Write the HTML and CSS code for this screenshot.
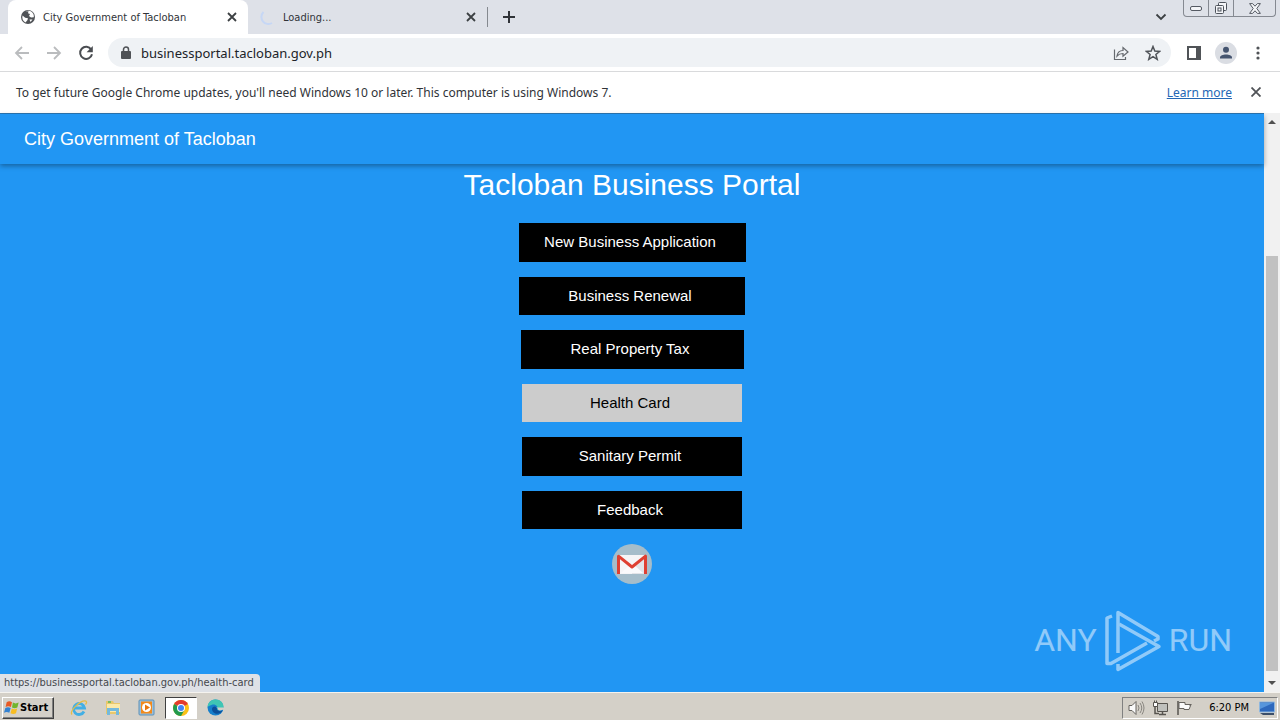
FILE: index.html
```html
<!DOCTYPE html>
<html lang="en">
<head>
<meta charset="utf-8">
<title>City Government of Tacloban</title>
<link rel="stylesheet" href="styles.css">
</head>
<body>
<div class="tabstrip">
  <div class="tab tab-active">
    <svg class="favicon" width="16" height="16" viewBox="0 0 16 16"><circle cx="8" cy="8" r="7" fill="#505357"/><path d="M2.500 6.500 5.200 8.700 8 9.200 7.500 11 5.500 13.500 C3 12.400 1.800 9.500 2.500 6.500Z M5.500 2.500 8.500 2.200 8 4.200 10 5 9 7 11 8.500 13.800 8.200 C14.500 4.500 11 1 7.800 1.800Z" fill="#fff"/><path d="M9.500 10.500h3l-2 2.500z" fill="#fff"/></svg>
    <span class="tab-title">City Government of Tacloban</span>
    <button class="icon-btn" aria-label="Close tab"><svg width="10" height="10" viewBox="0 0 10 10"><path d="M1 1l8 8M9 1l-8 8" stroke="#3c4043" stroke-width="1.8"/></svg></button>
  </div>
  <div class="tab">
    <svg class="favicon" width="16" height="16" viewBox="0 0 16 16"><path d="M3.500 3A7 7 0 0 0 12 14" fill="none" stroke="#c6d7f5" stroke-width="2"/></svg>
    <span class="tab-title">Loading...</span>
    <button class="icon-btn" aria-label="Close tab"><svg width="10" height="10" viewBox="0 0 10 10"><path d="M1 1l8 8M9 1l-8 8" stroke="#3c4043" stroke-width="1.8"/></svg></button>
  </div>
  <button class="icon-btn new-tab" aria-label="New tab"><svg width="12" height="12" viewBox="0 0 12 12"><path d="M6 0v12M0 6h12" stroke="#303338" stroke-width="2"/></svg></button>
  <button class="icon-btn tab-search" aria-label="Search tabs"><svg width="12" height="8" viewBox="0 0 12 8"><path d="M1.500 1.500 6 6l4.500-4.500" fill="none" stroke="#3c4043" stroke-width="1.800"/></svg></button>
  <div class="window-controls">
    <button class="win-btn" aria-label="Minimize"><svg width="12" height="5" viewBox="0 0 12 5"><rect x=".5" y=".5" width="11" height="4" rx="1.500" fill="#f4f5f8" stroke="#555a63"/></svg></button>
    <button class="win-btn" aria-label="Restore"><svg width="14" height="14" viewBox="0 0 14 14"><g fill="#f4f5f8" stroke="#4d525b"><rect x="4.500" y="1.500" width="8" height="8" rx="1"/><rect x="1.500" y="4.500" width="8" height="8" rx="1"/><rect x="4" y="7" width="3" height="3"/></g></svg></button>
    <button class="win-btn win-close" aria-label="Close"><svg width="12" height="11" viewBox="0 0 12 11"><path d="M.6.6h3L6 3.200 8.400.6h3L7.800 5.500l3.600 4.900h-3L6 7.800 3.600 10.400h-3l3.600-4.900z" fill="#f4f5f8" stroke="#555a63"/></svg></button>
  </div>
</div>

<div class="toolbar">
  <button class="icon-btn" aria-label="Back"><svg width="16" height="16" viewBox="0 0 16 16"><path d="M15 8H2M8 2 2 8l6 6" fill="none" stroke="#babcbe" stroke-width="1.800"/></svg></button>
  <button class="icon-btn" aria-label="Forward"><svg width="16" height="16" viewBox="0 0 16 16"><path d="M1 8h13M8 2l6 6-6 6" fill="none" stroke="#babcbe" stroke-width="1.800"/></svg></button>
  <button class="icon-btn" aria-label="Reload"><svg width="16" height="16" viewBox="0 0 16 16"><path d="M13.200 4.600A6 6 0 1 0 14 9.200" fill="none" stroke="#4a4d51" stroke-width="2"/><path d="M14.800 1v6.200H8.600z" fill="#4a4d51"/></svg></button>
  <div class="omnibox">
    <svg width="10" height="14" viewBox="0 0 10 14"><rect y="5" width="10" height="8" rx="1" fill="#4f5256"/><path d="M2.500 6V3.500a2.500 2.500 0 0 1 5 0V6" fill="none" stroke="#4f5256" stroke-width="1.500"/></svg>
    <input class="url" type="text" aria-label="Address" value="businessportal.tacloban.gov.ph">
    <button class="icon-btn" aria-label="Share"><svg width="16" height="16" viewBox="0 0 16 16"><path d="M1.500 4.500v10h11V12M4 11c.5-3.500 2-5.500 6-5.500V2.500l5 4.500-5 4.200V8.500C7 8.500 5.500 9.300 4 11z" fill="none" stroke="#65696e" stroke-width="1.200"/></svg></button>
    <button class="icon-btn" aria-label="Bookmark"><svg width="16" height="16" viewBox="0 0 16 16"><path d="M8 1.500l1.800 4.600 4.900.300-3.800 3.100 1.300 4.800L8 11.600l-4.200 2.700 1.300-4.800L1.300 6.400l4.900-.300z" fill="none" stroke="#505459" stroke-width="1.500"/></svg></button>
  </div>
  <div class="toolbar-end">
    <button class="icon-btn" aria-label="Side panel"><svg width="14" height="14" viewBox="0 0 14 14"><path d="M1 1h12v12H1z" fill="none" stroke="#505357" stroke-width="2"/><path d="M9 1h4v12H9z" fill="#505357"/></svg></button>
    <button class="icon-btn" aria-label="Profile"><svg width="22" height="22" viewBox="0 0 22 22"><circle cx="11" cy="11" r="11" fill="#dadde3"/><circle cx="11" cy="7.800" r="3" fill="#44546f"/><path d="M5 16.500v-1c0-4 12-4 12 0v1z" fill="#44546f"/></svg></button>
    <button class="icon-btn" aria-label="Menu"><svg width="4" height="14" viewBox="0 0 4 14" fill="#505357"><circle cx="2" cy="2" r="1.600"/><circle cx="2" cy="7" r="1.600"/><circle cx="2" cy="12" r="1.600"/></svg></button>
  </div>
</div>

<div class="infobar">
  <span>To get future Google Chrome updates, you'll need Windows 10 or later. This computer is using Windows 7.</span>
  <a class="learn" href="#">Learn more</a>
  <button class="icon-btn" aria-label="Dismiss"><svg width="10" height="10" viewBox="0 0 10 10"><path d="M.5.500l9 9M9.500.500l-9 9" stroke="#505357" stroke-width="1.800"/></svg></button>
</div>

<div class="viewport">
  <div class="page">
    <header class="site-header">City Government of Tacloban</header>
    <main class="portal">
      <h1 class="portal-title">Tacloban Business Portal</h1>
      <nav class="menu">
        <button class="menu-btn w-new">New Business Application</button>
        <button class="menu-btn w-renewal">Business Renewal</button>
        <button class="menu-btn w-tax">Real Property Tax</button>
        <button class="menu-btn menu-hover">Health Card</button>
        <button class="menu-btn">Sanitary Permit</button>
        <button class="menu-btn">Feedback</button>
      </nav>
      <a class="mail" href="#" aria-label="Gmail"><svg width="40" height="40" viewBox="0 0 40 40"><circle cx="20" cy="20" r="20" fill="#a5bdca"/><path d="M6 11h28v19H6z" fill="#f5f5f7"/><path d="M20 22l14-10v18H20z" fill="#e3e4e8"/><path d="M9 29l11-10 11 10z" fill="#fafafc"/><path d="M6.500 30V12.200L20 23l13.500-10.800V30" fill="none" stroke="#df4032" stroke-width="3" stroke-linejoin="round"/></svg></a>
    </main>
    <div class="watermark">
      <span>ANY</span>
      <svg width="58" height="64" viewBox="0 0 58 64" fill="none" stroke="#fff" stroke-width="3.500" stroke-linejoin="round"><path d="M14 45V4.500l40 24v2.500l-4 2"/><path d="M15 16l40 22.500L14 61.500V56"/><path d="M8 8l-5 2v45.500h4L43 35"/></svg>
      <span>RUN</span>
    </div>
    <div class="status">https://businessportal.tacloban.gov.ph/health-card</div>
  </div>
  <div class="scrollbar">
    <svg width="8" height="4" viewBox="0 0 8 4"><path d="M0 4l4-4 4 4z" fill="#505050"/></svg>
    <div class="thumb"></div>
    <svg width="8" height="4" viewBox="0 0 8 4"><path d="M0 0l4 4 4-4z" fill="#505050"/></svg>
  </div>
</div>

<div class="taskbar">
  <button class="start"><svg width="16" height="17" viewBox="0 0 18 17"><path d="M3 2.500q3-2 6 0L7.800 8q-3-1.800-6 0z" fill="#e85a25"/><path d="M10 3q3 1.800 6.500 0L15 8.500q-3 1.800-6 0z" fill="#72b52d"/><path d="M1.500 9q3-1.800 6 0L6 14.500q-3-1.800-6 0z" fill="#3382d2"/><path d="M8.800 9.500q3 1.800 6 0L13.500 15q-3 1.800-6.200 0z" fill="#f8bd22"/></svg>Start</button>
  <div class="launchers">
    <button class="task" aria-label="Internet Explorer"><svg width="18" height="18" viewBox="0 0 18 18"><path d="M14 12.500A5.500 5.500 0 1 1 14.500 9H5" fill="none" stroke="#43afe4" stroke-width="2.800"/><path d="M2 15.500C-1 12 11 .5 16 2.200c1 .600.500 2-.5 3.300" fill="none" stroke="#e6bc45" stroke-width="1.300"/></svg></button>
    <button class="task" aria-label="Explorer"><svg width="18" height="18" viewBox="0 0 18 18"><path d="M2 2h7l1 2h6v11H2z" fill="#e8c76b"/><path d="M3 5h13v8H3z" fill="#fbe9a8"/><path d="M3 9h12v7h-3v-4H6v4H3z" fill="#74b9dc"/><path d="M4 3h3" stroke="#56b75a" stroke-width="1.500"/></svg></button>
    <button class="task" aria-label="Media Player"><svg width="18" height="18" viewBox="0 0 18 18"><rect x="1" y="1" width="15" height="15" rx="1" fill="#9bc0dc" stroke="#5c91b8"/><rect x="3" y="2.500" width="11" height="12" fill="#f28a1b"/><circle cx="8.500" cy="8.500" r="4.500" fill="#fff"/><path d="M7 5.500l5 3-5 3z" fill="#e8760c"/></svg></button>
    <button class="task task-active" aria-label="Chrome"><svg width="16" height="16" viewBox="0 0 16 16"><circle cx="8" cy="8" r="8" fill="#fbc116"/><path d="M8 8 1.100 4A8 8 0 0 1 14.900 4z" fill="#e33b2e"/><path d="M1.100 4A8 8 0 0 0 8 16l3.500-6L8 8z" fill="#229a4d"/><circle cx="8" cy="8" r="4" fill="#fff"/><circle cx="8" cy="8" r="3" fill="#4285f4"/></svg></button>
    <button class="task" aria-label="Edge"><svg width="17" height="17" viewBox="0 0 17 17"><circle cx="8.500" cy="8.500" r="8" fill="#167fcb"/><path d="M.5 8C1 3 4.500.5 8.500.5c5 0 8 3.500 8 7C16.500 11 12 12 10 10.500c2-3-2-6-5.500-4.500C2.500 6.500 1 7.500.5 8z" fill="#3fc6b4"/><path d="M5 10c0-3 5-4 5 .500 1 2 4 2 5.500 1-2 5-10.500 4-10.500-1.500z" fill="#0c4f99"/><path d="M9 8.500c3 0 1 3 4 3l4-1v-2z" fill="#d4d0c8"/></svg></button>
  </div>
  <div class="tray">
    <svg width="17" height="16" viewBox="0 0 17 16"><path d="M1 5.500h3l4-4v13l-4-4H1z" fill="#fafafa" stroke="#66635e"/><path d="M10 5q2 3 0 6M12 3q3.500 5 0 10M14 1.500q4 6.500 0 13" fill="none" stroke="#88857f"/></svg>
    <svg width="17" height="16" viewBox="0 0 17 16"><path d="M5.500 3.500h10v8h-10z" fill="#bfc0bc" stroke="#57544f"/><path d="M7 14.500h7M10.500 12v2M3 6v7.500h4" stroke="#57544f" fill="none" stroke-width="1.500"/><path d="M1.500 2.500h4v4h-4zM2.500.5v2M4.500.5v2" fill="#fff" stroke="#57544f"/></svg>
    <svg width="17" height="16" viewBox="0 0 17 16"><path d="M2 1v14" stroke="#57544f" stroke-width="1.500"/><path d="M3 2.500h6v2h6q-2 2 0 0l-2 5H8v-1H3z" fill="#fafafa" stroke="#66635e"/></svg>
    <span class="clock">6:20 PM</span>
    <svg width="16" height="14" viewBox="0 0 16 14"><path d="M.5 1h15v10H.5z" fill="#2d68bd" stroke="#8eb7df"/><path d="M1 2h13L1 8z" fill="#5695dc"/><path d="M1 12h14v2H4z" fill="#3c4f69"/></svg>
  </div>
</div>
</body>
</html>
```
FILE: styles.css
```css
* { box-sizing: border-box; }
body {
  margin: 0;
  height: 100vh;
  display: flex;
  flex-direction: column;
  overflow: hidden;
  font-family: "DejaVu Sans Condensed", "DejaVu Sans", sans-serif;
  font-size: 12px;
  color: #303338;
}
button { border: 0; padding: 0; background: none; font: inherit; color: inherit; }
svg { display: block; flex: none; }
.icon-btn { display: flex; align-items: center; justify-content: center; flex: none; }

.tabstrip { display: flex; flex: none; height: 34px; padding-left: 8px; background: #dee1e8; }
.tab { display: flex; align-items: center; width: 239px; padding: 0 11px 0 12px; font-size: 11px; }
.tab-active { width: 240px; background: #fff; border-radius: 8px 8px 0 0; }
.favicon { margin-right: 7px; }
.tab-title { flex: 1; white-space: nowrap; }
.new-tab { align-self: center; height: 20px; padding-left: 15px; border-left: 1px solid #85898f; }
.tab-search { margin-left: auto; padding-right: 16px; }
.window-controls { display: flex; height: 17px; margin-right: 4px; border: 1px solid #858991; border-top: 0; border-radius: 0 0 4px 4px; }
.win-btn { display: flex; align-items: center; justify-content: center; width: 25px; border-right: 1px solid #858991; }
.win-close { width: 41px; border-right: 0; }

.toolbar { display: flex; flex: none; align-items: center; height: 38px; padding: 0 20px 0 14px; gap: 16px; background: #fff; border-bottom: 1px solid #d9dadc; }
.omnibox { display: flex; flex: 1; align-items: center; height: 29px; margin-left: -2px; padding: 0 10px 0 13px; border-radius: 15px; background: #eff2f5; }
.url { flex: 1; min-width: 0; margin-left: 10px; padding: 0; border: 0; outline: 0; background: none; font: inherit; font-family: "Noto Sans", sans-serif; font-size: 13px; color: #202328; }
.omnibox .icon-btn { margin-left: 16px; }
.toolbar-end { display: flex; align-items: center; gap: 14px; }
.toolbar-end .icon-btn:last-child { margin-left: 5px; }

.infobar { display: flex; flex: none; align-items: center; height: 41px; padding: 0 19px 1px 16px; background: #fff; font-family: "Noto Sans", sans-serif; }
.learn { margin-left: auto; margin-right: 19px; color: #2467b5; }

.viewport { display: flex; flex: 1; min-height: 0; }
.page { position: relative; flex: 1; background: #2196f3; font-family: "Liberation Sans", Arial, sans-serif; border-top: 1px solid #2b77b5; }
.site-header { display: flex; align-items: center; height: 50px; padding: 0 24px; color: #fff; font-size: 18px; box-shadow: 0 2px 5px rgba(0, 0, 0, .35); }
.portal { display: flex; flex-direction: column; align-items: center; }
.portal-title { margin: 3px 0 21px; font-size: 30px; line-height: 35px; font-weight: 400; color: #fff; }
.menu { display: grid; grid-template-rows: repeat(6, 1fr); gap: 15px; height: 306px; justify-items: center; }
.menu-btn { width: 220px; padding: 0 4px 1px 0; background: #000; color: #fff; font-size: 15px; }
.menu-hover { background: #ccc; color: #000; }
.w-new { width: 227px; }
.w-renewal { width: 226px; }
.w-tax { width: 223px; }
.mail { margin-top: 15px; }
.watermark { position: absolute; right: 32px; bottom: 20px; display: flex; align-items: center; gap: 7px; color: #fff; opacity: .5; font-family: Roboto, sans-serif; font-size: 32px; }
.status { position: absolute; left: 0; bottom: 0; height: 18px; padding: 0 6px 0 4px; border-radius: 0 4px 0 0; background: #dee1e6; color: #45484d; font-family: "DejaVu Sans Condensed", "DejaVu Sans", sans-serif; font-size: 11px; line-height: 18px; }

.scrollbar { display: flex; flex-direction: column; align-items: center; width: 16px; padding: 7px 0; background: #f1f1f1; }
.thumb { flex: 1; width: 12px; margin: 132px 0 10px; background: #c1c1c1; }

.taskbar { display: flex; flex: none; align-items: center; height: 28px; padding: 2px 2px 0 2px; background: #d4d0c8; border-top: 1px solid #f5f3ef; }
.start { display: flex; align-items: center; height: 22px; width: 52px; padding: 0 1px; color: #000; font-size: 11px; font-weight: 700; border: 1px solid; border-color: #fff #404040 #404040 #fff; box-shadow: inset -1px -1px #808080; }
.launchers { display: flex; margin-left: 9px; gap: 2px; }
.task { display: flex; align-items: center; justify-content: center; width: 32px; height: 22px; }
.task-active { background: #fff; border: 1px solid; border-color: #404040 #fff #fff #404040; }
.tray { display: flex; align-items: center; gap: 7px; height: 22px; margin-left: auto; padding: 0 2px 0 5px; border: 1px solid; border-color: #808080 #fff #fff #808080; }
.clock { margin: 0 3px 0 9px; color: #000; font-size: 11px; white-space: nowrap; }
```
